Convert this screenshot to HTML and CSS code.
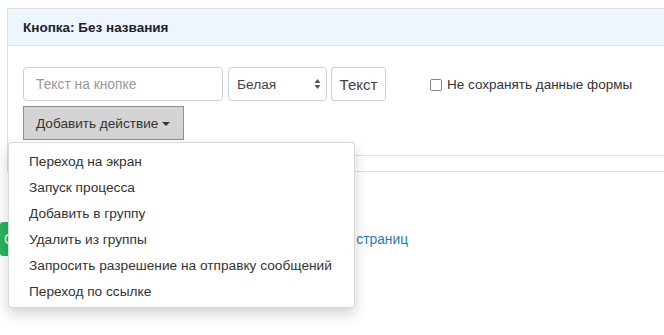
FILE: index.html
```html
<!DOCTYPE html>
<html lang="ru">
<head>
<meta charset="utf-8">
<title>Кнопка</title>
<link rel="stylesheet" href="styles.css">
</head>
<body>
<div class="panel">
  <div class="panel-heading">Кнопка: Без названия</div>
  <div class="panel-body">
    <div class="row">
      <input class="field" type="text" placeholder="Текст на кнопке">
      <div class="select">
        <span>Белая</span>
        <svg class="arrows" width="7" height="12" viewBox="0 0 7 12"><path d="M3.5 1 L6.5 5 H0.5 Z M3.5 11 L6.5 7 H0.5 Z" fill="#555"/></svg>
      </div>
      <button class="btn-text">Текст</button>
      <label class="check"><span class="box"></span>Не сохранять данные формы</label>
    </div>
    <div class="row2">
      <div class="dd">
        <button class="btn-action">Добавить действие <span class="caret"></span></button>
        <ul class="menu">
          <li>Переход на экран</li>
          <li>Запуск процесса</li>
          <li>Добавить в группу</li>
          <li>Удалить из группы</li>
          <li>Запросить разрешение на отправку сообщений</li>
          <li>Переход по ссылке</li>
        </ul>
      </div>
    </div>
  </div>
  <div class="panel-footer"></div>
</div>
<div class="bottom">
  <button class="btn-green">Сохранить</button>
  <a class="link" href="#">Список страниц</a>
</div>
</body>
</html>
```
FILE: styles.css
```css
html, body { margin: 0; padding: 0; background: #fff; }
html { height: 100%; }
body {
  font-family: "Liberation Sans", Arial, sans-serif;
  font-size: 13.7px;
  color: #333;
  padding: 8px 0 0 7px;
  min-height: 335px;
  box-sizing: border-box;
}
.panel {
  border: 1px solid #e0e0e0;
  border-right: none;
  background: #fff;
}
.panel-heading {
  background: #eef6fd;
  border-bottom: 1px solid #dfe3e6;
  height: 37px;
  box-sizing: border-box;
  padding: 11px 15px 0 15px;
  font-weight: bold;
  font-size: 13.5px;
  color: #222;
}
.panel-body {
  padding: 21px 15px 15px 15px;
}
.row {
  display: flex;
  align-items: center;
  height: 34px;
}
.field {
  width: 200px;
  height: 34px;
  box-sizing: border-box;
  border: 1px solid #d0d0d0;
  border-radius: 4px;
  padding: 0 12px;
  font-family: inherit;
  font-size: 13.8px;
  color: #333;
  margin: 0;
}
.field::placeholder { color: #999; }
.select {
  margin-left: 5px;
  width: 99px;
  height: 34px;
  box-sizing: border-box;
  border: 1px solid #d0d0d0;
  border-radius: 4px;
  display: flex;
  align-items: center;
  justify-content: space-between;
  padding: 0 5px 0 8px;
  color: #444;
}
.btn-text {
  margin-left: 4px;
  width: 55px;
  height: 34px;
  box-sizing: border-box;
  border: 1px solid #d0d0d0;
  border-radius: 3px;
  background: #fff;
  font-family: inherit;
  font-size: 15px;
  font-weight: normal;
  color: #444;
  padding: 0;
}
.check {
  margin-left: 44px;
  display: flex;
  align-items: center;
  font-size: 13.5px;
  color: #333;
}
.box {
  width: 10px;
  height: 10px;
  border: 1px solid #888;
  border-radius: 2px;
  margin-right: 5px;
  margin-top: 1px;
  background: #fff;
}
.row2 { margin-top: 5px; display: flex; }
.dd { position: relative; }
.btn-action {
  height: 34px;
  width: 161px;
  box-sizing: border-box;
  background: #d4d4d4;
  border: 1px solid #8f8f8f;
  border-radius: 0;
  font-family: inherit;
  font-size: 13.6px;
  color: #333;
  padding: 0 10px 0 12px;
  white-space: nowrap;
  display: flex;
  align-items: center;
}
.caret {
  display: inline-block;
  width: 0; height: 0;
  border-top: 4px solid #333;
  border-left: 4px solid transparent;
  border-right: 4px solid transparent;
  margin-left: 4px;
  margin-top: 1px;
}
.menu {
  position: absolute;
  left: -15px;
  top: 36px;
  z-index: 10;
  width: 347px;
  height: 166px;
  box-sizing: border-box;
  margin: 0;
  padding: 6px 0 0 0;
  list-style: none;
  background: #fff;
  border: 1px solid rgba(0,0,0,.15);
  border-radius: 4px;
  box-shadow: 0 6px 14px rgba(0,0,0,.18);
}
.menu li {
  height: 26px;
  line-height: 26px;
  padding: 0 20px;
  color: #333;
  white-space: nowrap;
}
.panel-footer {
  border-top: 1px solid #dfe3e6;
  height: 15px;
}
.bottom {
  margin-top: 50px;
  margin-left: -7px;
  display: flex;
  align-items: center;
}
.btn-green {
  height: 34px;
  background: #27b560;
  color: #fff;
  border: none;
  border-radius: 3px;
  padding: 0 12px 0 4px;
  font-family: inherit;
  font-size: 13.8px;
}
.link {
  margin-left: 222px;
  color: #2a7ab8;
  text-decoration: none;
  font-size: 13.8px;
}
```
